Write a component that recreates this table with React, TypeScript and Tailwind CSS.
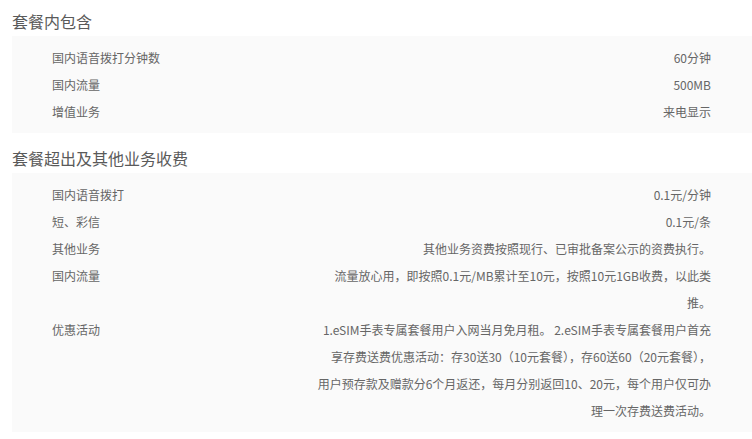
const FONT = "font-['Microsoft_YaHei','Noto_Sans_CJK_SC',sans-serif]";

type Row = { label: string; value: string[] };

const INCLUDED: Row[] = [
  { label: '国内语音拨打分钟数', value: ['60分钟'] },
  { label: '国内流量', value: ['500MB'] },
  { label: '增值业务', value: ['来电显示'] },
];

const EXTRA: Row[] = [
  { label: '国内语音拨打', value: ['0.1元/分钟'] },
  { label: '短、彩信', value: ['0.1元/条'] },
  { label: '其他业务', value: ['其他业务资费按照现行、已审批备案公示的资费执行。'] },
  {
    label: '国内流量',
    value: ['流量放心用，即按照0.1元/MB累计至10元，按照10元1GB收费，以此类', '推。'],
  },
  {
    label: '优惠活动',
    value: [
      '1.eSIM手表专属套餐用户入网当月免月租。 2.eSIM手表专属套餐用户首充',
      '享存费送费优惠活动：存30送30（10元套餐），存60送60（20元套餐），',
      '用户预存款及赠款分6个月返还，每月分别返回10、20元，每个用户仅可办',
      '理一次存费送费活动。',
    ],
  },
];

function Section({ title, rows, first }: { title: string; rows: Row[]; first?: boolean }) {
  return (
    <section>
      <h2 className={`${first ? 'pt-[9px]' : 'pt-[13px]'} pb-[3px] text-[16px] leading-[24px] text-[#5a5a5a]`}>
        {title}
      </h2>
      <div className="bg-[#fafafa] py-2 pl-10 pr-[41px]">
        {rows.map((r) => (
          <div key={r.label + r.value[0]} className="flex justify-between text-[12px] leading-[27px] text-[#666]">
            <span className="whitespace-nowrap">{r.label}</span>
            <div className="flex flex-col items-end">
              {r.value.map((line) => (
                <span key={line} className="whitespace-nowrap">{line}</span>
              ))}
            </div>
          </div>
        ))}
      </div>
    </section>
  );
}

export default function App() {
  return (
    <div className={`${FONT} w-[752px] h-[439px] overflow-hidden bg-white pl-3`}>
      <Section title="套餐内包含" rows={INCLUDED} first />
      <Section title="套餐超出及其他业务收费" rows={EXTRA} />
    </div>
  );
}
